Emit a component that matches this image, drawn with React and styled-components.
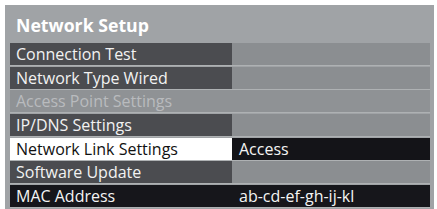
import React from 'react';
import styled, { createGlobalStyle } from 'styled-components';

const GlobalStyle = createGlobalStyle`
  html, body {
    margin: 0;
    padding: 0;
    background: #ffffff;
    width: 437px;
    height: 209px;
    overflow: hidden;
  }
`;

const tones = {
  normal: { left: '#4b4c50', right: '#8b8e91', text: '#f2f2f2', value: '#f2f2f2' },
  disabled: { left: '#8f9295', right: '#8f9295', text: '#b9bbbe', value: '#b9bbbe' },
  selected: { left: '#ffffff', right: '#141418', text: '#111111', value: '#f4f4f4' },
  info: { left: '#16161b', right: '#16161b', text: '#f4f4f4', value: '#f4f4f4' },
};

const Panel = styled.div`
  margin: 5px 3px 0 5px;
  height: 210px;
  background: #a0a3a6;
  padding: 0 4px 0 5px;
  display: flex;
  flex-direction: column;
  font-family: 'Open Sans', 'Noto Sans', sans-serif;
`;

const Title = styled.h1`
  margin: 0;
  height: 38px;
  box-sizing: border-box;
  padding: 2px 0 0 6px;
  display: flex;
  align-items: center;
  font-size: 17.7px;
  font-weight: 700;
  color: #ffffff;
`;

const List = styled.div`
  display: flex;
  flex-direction: column;
  gap: 1.7px;
`;

const Row = styled.div`
  display: grid;
  grid-template-columns: 222px 1fr;
  height: 22px;
  box-shadow: 0 1px 0 #aeb1b3;
`;

const Label = styled.div`
  background: ${({ tone }) => tones[tone].left};
  color: ${({ tone }) => tones[tone].text};
  display: flex;
  align-items: center;
  padding-left: 6px;
  font-size: 16px;
  white-space: nowrap;
`;

const Value = styled.div`
  background: ${({ tone }) => tones[tone].right};
  color: ${({ tone }) => tones[tone].value};
  display: flex;
  align-items: center;
  padding-left: 7px;
  font-size: 16px;
  white-space: nowrap;
`;

const items = [
  { label: 'Connection Test', tone: 'normal' },
  { label: 'Network Type Wired', tone: 'normal' },
  { label: 'Access Point Settings', tone: 'disabled' },
  { label: 'IP/DNS Settings', tone: 'normal' },
  { label: 'Network Link Settings', value: 'Access', tone: 'selected' },
  { label: 'Software Update', tone: 'normal' },
  { label: 'MAC Address', value: 'ab-cd-ef-gh-ij-kl', tone: 'info' },
];

const App = () => (
  <>
    <GlobalStyle />
    <Panel>
      <Title>Network Setup</Title>
      <List>
        {items.map((item) => (
          <Row key={item.label}>
            <Label tone={item.tone}>{item.label}</Label>
            <Value tone={item.tone}>{item.value}</Value>
          </Row>
        ))}
      </List>
    </Panel>
  </>
);

export default App;
